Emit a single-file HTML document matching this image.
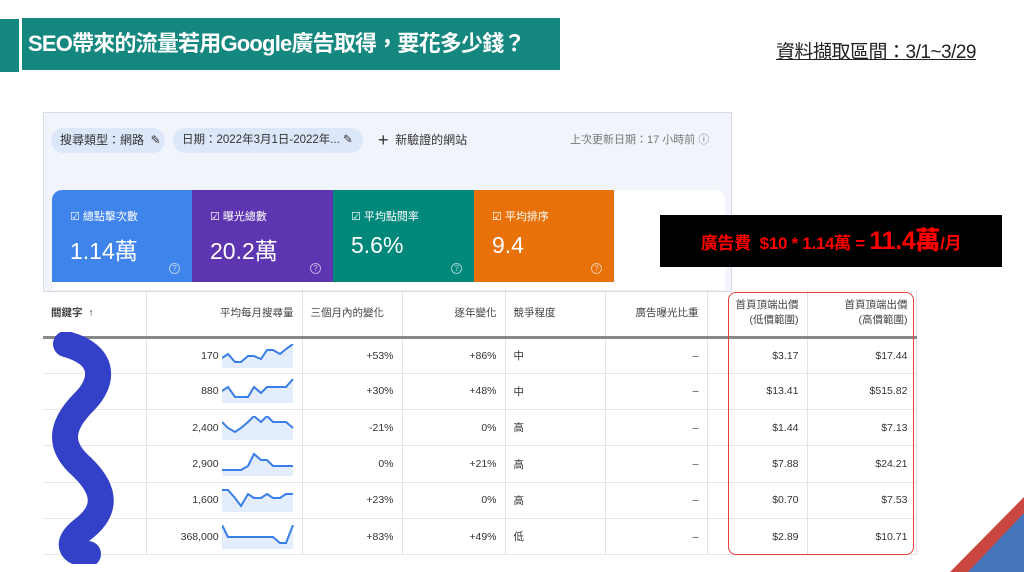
<!DOCTYPE html>
<html><head><meta charset="utf-8"><style>
*{margin:0;padding:0;box-sizing:border-box}
body{width:1024px;height:572px;overflow:hidden;background:#fff;font-family:"Liberation Sans","Noto Sans CJK TC",sans-serif;position:relative}
.abs{position:absolute}
.title{left:22px;top:18px;width:538px;height:52px;background:#14877f;color:#fff;font-weight:bold;font-size:22px;line-height:52px;padding-left:6px;letter-spacing:-0.8px;white-space:nowrap}
.tl{left:0;top:19px;width:19px;height:53px;background:#14877f}
.date{left:776px;top:37px;font-size:19px;color:#222;text-decoration:underline;letter-spacing:-0.5px;white-space:nowrap}
.panel{left:43px;top:112px;width:689px;height:180px;background:#f1f4fb;border:1px solid #d8dbe2}
.chip{top:128px;height:25px;border-radius:13px;background:#dce7f9;font-size:12px;line-height:25px;color:#333;padding-left:9px;white-space:nowrap;overflow:hidden}
.card{top:190px;height:92px;color:#fff}
.card .l{position:absolute;left:18px;top:18px;font-size:11px}
.card .v{position:absolute;left:18px;top:42px;font-size:23px}
.card .q{position:absolute;right:12px;bottom:8px;width:11px;height:11px;border:1px solid rgba(255,255,255,.6);border-radius:50%;font-size:8px;line-height:9px;text-align:center;color:rgba(255,255,255,.7)}
.box{left:660px;top:215px;width:342px;height:52px;background:#000;color:#f00;font-weight:bold;font-size:17px;line-height:52px;text-align:center;white-space:nowrap;letter-spacing:-0.3px}
.box b{font-size:25px}
table{position:absolute;left:43px;top:290px;border-collapse:collapse;font-size:10.5px;color:#333}
td,th{border-right:1px solid #e2e2e2;border-bottom:1px solid #e6e6e6;padding:0 8px;font-weight:normal;white-space:nowrap}
th{height:47px;color:#444;border-bottom:3px solid #888}
td{height:36.3px}
.r{text-align:right}
</style></head><body>
<div class="abs tl"></div>
<div class="abs title">SEO帶來的流量若用Google廣告取得，要花多少錢？</div>
<div class="abs date">資料擷取區間：3/1~3/29</div>
<div class="abs panel"></div>
<div class="abs chip" style="left:51px;width:114px">搜尋類型：網路 &nbsp;✎</div>
<div class="abs chip" style="left:173px;width:190px;font-size:11.5px">日期：2022年3月1日-2022年... ✎</div>
<div class="abs" style="left:378px;top:128px;font-size:12px;line-height:25px;color:#333"><span style="font-size:18px;vertical-align:-2px">+</span> &nbsp;新驗證的網站</div>
<div class="abs" style="left:570px;top:128px;font-size:11px;line-height:25px;color:#777">上次更新日期：17 小時前 ⓘ</div>
<div class="abs" style="left:52px;top:190px;width:673px;height:100px;background:#fff;border-radius:10px 10px 0 0"></div>
<div class="abs card" style="left:52px;width:140px;background:#3f84ea;border-top-left-radius:10px"><div class="l">☑ 總點擊次數</div><div class="v">1.14萬</div><div class="q">?</div></div>
<div class="abs card" style="left:192px;width:141px;background:#5e35b1"><div class="l">☑ 曝光總數</div><div class="v">20.2萬</div><div class="q">?</div></div>
<div class="abs card" style="left:333px;width:141px;background:#00897b"><div class="l">☑ 平均點閱率</div><div class="v">5.6%</div><div class="q">?</div></div>
<div class="abs card" style="left:474px;width:140px;background:#e8710a"><div class="l">☑ 平均排序</div><div class="v">9.4</div><div class="q">?</div></div>
<div class="abs box">廣告費 &nbsp;$10 * 1.14萬 = <b>11.4萬</b>/月</div>
<table>
<tr><th style="width:103px;text-align:left;font-weight:bold">關鍵字 &nbsp;↑</th><th class="r" style="width:156px">平均每月搜尋量</th><th style="width:100px;text-align:left">三個月內的變化</th><th class="r" style="width:103px">逐年變化</th><th style="width:100px;text-align:left">競爭程度</th><th class="r" style="width:102px">廣告曝光比重</th><th class="r" style="width:100px;line-height:15px">首頁頂端出價<br>(低價範圍)</th><th class="r" style="width:109px;line-height:15px">首頁頂端出價<br>(高價範圍)</th></tr>
<tr><td></td><td class="r">170 <svg width="72" height="24" style="vertical-align:middle"><polyline points="0,14 6,10 13,18 19,18 26,12 32,12 39,15 45,6 51,6 58,10 64,5 71,0 71,24 0,24" fill="#e3edfb"/><polyline points="0,14 6,10 13,18 19,18 26,12 32,12 39,15 45,6 51,6 58,10 64,5 71,0" fill="none" stroke="#3a7ee8" stroke-width="2"/></svg></td><td class="r">+53%</td><td class="r">+86%</td><td>中</td><td class="r">–</td><td class="r">$3.17</td><td class="r">$17.44</td></tr>
<tr><td></td><td class="r">880 <svg width="72" height="24" style="vertical-align:middle"><polyline points="0,12 6,8 13,18 19,18 26,18 32,8 39,14 45,8 51,8 58,8 64,8 71,0 71,24 0,24" fill="#e3edfb"/><polyline points="0,12 6,8 13,18 19,18 26,18 32,8 39,14 45,8 51,8 58,8 64,8 71,0" fill="none" stroke="#3a7ee8" stroke-width="2"/></svg></td><td class="r">+30%</td><td class="r">+48%</td><td>中</td><td class="r">–</td><td class="r">$13.41</td><td class="r">$515.82</td></tr>
<tr><td></td><td class="r">2,400 <svg width="72" height="24" style="vertical-align:middle"><polyline points="0,6 6,12 13,16 19,12 26,6 32,0 39,6 45,0 51,6 58,6 64,6 71,12 71,24 0,24" fill="#e3edfb"/><polyline points="0,6 6,12 13,16 19,12 26,6 32,0 39,6 45,0 51,6 58,6 64,6 71,12" fill="none" stroke="#3a7ee8" stroke-width="2"/></svg></td><td class="r">-21%</td><td class="r">0%</td><td>高</td><td class="r">–</td><td class="r">$1.44</td><td class="r">$7.13</td></tr>
<tr><td></td><td class="r">2,900 <svg width="72" height="24" style="vertical-align:middle"><polyline points="0,18 6,18 13,18 19,18 26,14 32,2 39,8 45,8 51,14 58,14 64,14 71,14 71,24 0,24" fill="#e3edfb"/><polyline points="0,18 6,18 13,18 19,18 26,14 32,2 39,8 45,8 51,14 58,14 64,14 71,14" fill="none" stroke="#3a7ee8" stroke-width="2"/></svg></td><td class="r">0%</td><td class="r">+21%</td><td>高</td><td class="r">–</td><td class="r">$7.88</td><td class="r">$24.21</td></tr>
<tr><td></td><td class="r">1,600 <svg width="72" height="24" style="vertical-align:middle"><polyline points="0,2 6,2 13,10 19,18 26,6 32,10 39,10 45,6 51,10 58,10 64,6 71,6 71,24 0,24" fill="#e3edfb"/><polyline points="0,2 6,2 13,10 19,18 26,6 32,10 39,10 45,6 51,10 58,10 64,6 71,6" fill="none" stroke="#3a7ee8" stroke-width="2"/></svg></td><td class="r">+23%</td><td class="r">0%</td><td>高</td><td class="r">–</td><td class="r">$0.70</td><td class="r">$7.53</td></tr>
<tr><td></td><td class="r">368,000 <svg width="72" height="24" style="vertical-align:middle"><polyline points="0,0 6,12 13,12 19,12 26,12 32,12 39,12 45,12 51,12 58,18 64,18 71,0 71,24 0,24" fill="#e3edfb"/><polyline points="0,0 6,12 13,12 19,12 26,12 32,12 39,12 45,12 51,12 58,18 64,18 71,0" fill="none" stroke="#3a7ee8" stroke-width="2"/></svg></td><td class="r">+83%</td><td class="r">+49%</td><td>低</td><td class="r">–</td><td class="r">$2.89</td><td class="r">$10.71</td></tr>
</table>
<div class="abs" style="left:728px;top:292px;width:186px;height:263px;border:1.5px solid #e8403c;border-radius:8px"></div>
<svg class="abs" style="left:44px;top:332px" width="74" height="232"><path d="M22 12 C60 22,62 48,40 70 C15 95,15 115,38 135 C64 160,62 180,38 198 C20 212,28 222,44 222" fill="none" stroke="#3341c8" stroke-width="26" stroke-linecap="round"/></svg>
<svg class="abs" style="left:940px;top:490px" width="84" height="82"><polygon points="10,82 84,7 84,82" fill="#c9473f"/><polygon points="28,82 84,23 84,82" fill="#4677bd"/></svg>
</body></html>
